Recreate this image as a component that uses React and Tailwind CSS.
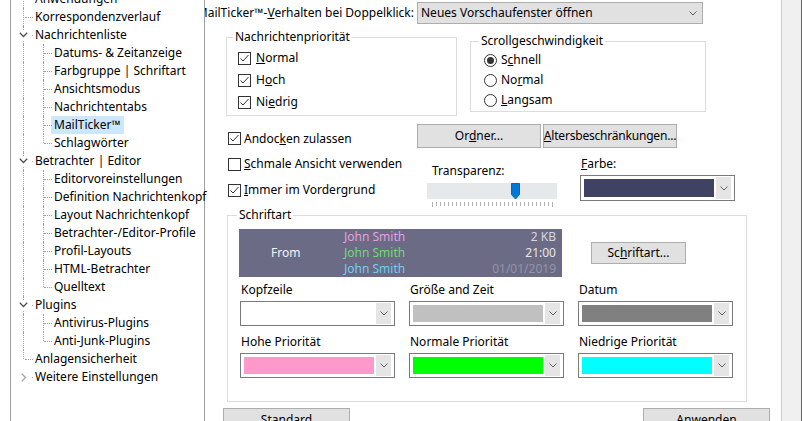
import React from 'react';

function Chevron({ color = '#606060' }) {
  return (
    <svg width="8" height="5" viewBox="0 0 8 5" className="block">
      <polyline points="0.5,0.5 4,4 7.5,0.5" fill="none" stroke={color} strokeWidth="1" />
    </svg>
  );
}

function TreeChevron({ open }) {
  return open ? (
    <svg width="9" height="6" viewBox="0 0 9 6" className="block">
      <polyline points="0.8,0.8 4.5,4.5 8.2,0.8" fill="none" stroke="#505050" strokeWidth="1.3" />
    </svg>
  ) : (
    <svg width="6" height="9" viewBox="0 0 6 9" className="block">
      <polyline points="0.8,0.8 4.5,4.5 0.8,8.2" fill="none" stroke="#a8a8a8" strokeWidth="1.3" />
    </svg>
  );
}

const rows = [
  { t: 'Anwendungen', lvl: 1, l1: 'full' },
  { t: 'Korrespondenzverlauf', lvl: 1, l1: 'full' },
  { t: 'Nachrichtenliste', lvl: 1, l1: 'full', exp: 'open' },
  { t: 'Datums- & Zeitanzeige', lvl: 2, l1: 'full', l2: 'full' },
  { t: 'Farbgruppe | Schriftart', lvl: 2, l1: 'full', l2: 'full' },
  { t: 'Ansichtsmodus', lvl: 2, l1: 'full', l2: 'full' },
  { t: 'Nachrichtentabs', lvl: 2, l1: 'full', l2: 'full' },
  { t: 'MailTicker™', lvl: 2, l1: 'full', l2: 'full', sel: true },
  { t: 'Schlagwörter', lvl: 2, l1: 'full', l2: 'half' },
  { t: 'Betrachter | Editor', lvl: 1, l1: 'full', exp: 'open' },
  { t: 'Editorvoreinstellungen', lvl: 2, l1: 'full', l2: 'full' },
  { t: 'Definition Nachrichtenkopf', lvl: 2, l1: 'full', l2: 'full' },
  { t: 'Layout Nachrichtenkopf', lvl: 2, l1: 'full', l2: 'full' },
  { t: 'Betrachter-/Editor-Profile', lvl: 2, l1: 'full', l2: 'full' },
  { t: 'Profil-Layouts', lvl: 2, l1: 'full', l2: 'full' },
  { t: 'HTML-Betrachter', lvl: 2, l1: 'full', l2: 'full' },
  { t: 'Quelltext', lvl: 2, l1: 'full', l2: 'half' },
  { t: 'Plugins', lvl: 1, l1: 'full', exp: 'open' },
  { t: 'Antivirus-Plugins', lvl: 2, l1: 'full', l2: 'full' },
  { t: 'Anti-Junk-Plugins', lvl: 2, l1: 'full', l2: 'half' },
  { t: 'Anlagensicherheit', lvl: 1, l1: 'half' },
  { t: 'Weitere Einstellungen', lvl: 1, l1: 'none', exp: 'closed' },
];

function TreeRow({ r }) {
  return (
    <div className="relative h-[18px] flex items-center whitespace-nowrap">
      {r.l1 === 'full' && (
        <span className="absolute left-[12px] top-0 h-[18px] border-l border-dotted border-[#a0a0a0]" />
      )}
      {r.l1 === 'half' && (
        <span className="absolute left-[12px] top-0 h-[9px] border-l border-dotted border-[#a0a0a0]" />
      )}
      {r.lvl === 1 && !r.exp && (
        <span className="absolute left-[14px] top-[9px] w-[8px] border-t border-dotted border-[#a0a0a0]" />
      )}
      {r.lvl === 1 && r.exp && (
        <span className="absolute left-[21px] top-[9px] w-[1px] h-[1px] bg-[#a0a0a0]" />
      )}
      {r.exp === 'open' && (
        <span className="absolute left-[7px] top-[4px] w-[11px] h-[10px] bg-white flex items-center justify-center">
          <TreeChevron open />
        </span>
      )}
      {r.exp === 'closed' && (
        <span className="absolute left-[8px] top-[4px] w-[9px] h-[10px] bg-white flex items-center justify-center">
          <TreeChevron open={false} />
        </span>
      )}
      {r.l2 === 'full' && (
        <span className="absolute left-[32px] top-0 h-[18px] border-l border-dotted border-[#a0a0a0]" />
      )}
      {r.l2 === 'half' && (
        <span className="absolute left-[32px] top-0 h-[9px] border-l border-dotted border-[#a0a0a0]" />
      )}
      {r.lvl === 2 && (
        <span className="absolute left-[33px] top-[9px] w-[8px] border-t border-dotted border-[#a0a0a0]" />
      )}
      {r.lvl === 1 ? (
        <span className="ml-[24px]">{r.t}</span>
      ) : r.sel ? (
        <span className="ml-[40px] px-[3px] h-[18px] flex items-center bg-[#cce8ff]">{r.t}</span>
      ) : (
        <span className="ml-[43px]">{r.t}</span>
      )}
    </div>
  );
}

function Check({ checked }) {
  return (
    <span className="w-[13px] h-[13px] border border-[#333333] bg-white flex items-center justify-center shrink-0">
      {checked && (
        <svg width="11" height="11" viewBox="0 0 11 11" className="block">
          <polyline points="1.5,5.5 4,8 9.5,2" fill="none" stroke="#333333" strokeWidth="1" />
        </svg>
      )}
    </span>
  );
}

function Radio({ checked }) {
  return (
    <span className="w-[13px] h-[13px] rounded-full border border-[#333333] bg-white flex items-center justify-center shrink-0">
      {checked && <span className="w-[7px] h-[7px] rounded-full bg-[#333333]" />}
    </span>
  );
}

function Combo({ swatch, tall }) {
  return (
    <div
      className={`w-[155px] ${tall ? 'h-[26px]' : 'h-[25px]'} border border-[#7a7a7a] bg-white flex items-center p-[3px] gap-[2px]`}
    >
      <div className={`flex-1 h-full ${swatch}`} />
      <div className={`w-[15px] ${tall ? 'h-[22px]' : 'h-[21px]'} bg-[#e5e5e5] flex items-center justify-center shrink-0`}>
        <Chevron />
      </div>
    </div>
  );
}

function ComboCell({ label, swatch }) {
  return (
    <div className="flex flex-col">
      <div className="h-[16px] pl-[1px]">{label}</div>
      <div className="mt-[3px]">
        <Combo swatch={swatch} />
      </div>
    </div>
  );
}

export default function App() {
  return (
    <div className="font-['Noto_Sans',sans-serif] w-[802px] h-[421px] overflow-hidden bg-white flex text-[12px] leading-[16px] text-black">
      {/* Tree */}
      <div className="w-[205px] shrink-0 pl-[10px]">
        <div className="w-[195px] h-[470px] -mt-[20px] pt-[9px] border border-[#a0a0a0] bg-white">
          {rows.map((r, i) => (
            <TreeRow key={i} r={r} />
          ))}
        </div>
      </div>

      {/* Main settings */}
      <div className="w-[576px] shrink-0 flex flex-col">
        <div className="flex items-center mt-[2px] h-[22px]">
          <div className="w-[212px] overflow-hidden flex justify-end pr-[3px] whitespace-nowrap">
            <span className="shrink-0">
              MailTicker™-<u>V</u>erhalten bei Doppelklick:
            </span>
          </div>
          <div className="w-[286px] h-[22px] border border-[#adadad] bg-[#e1e1e1] flex items-center justify-between pl-[3px] pr-[5px]">
            <span>Neues Vorschaufenster öffnen</span>
            <Chevron />
          </div>
        </div>

        <div className="flex items-start mt-[5px]">
          <fieldset className="ml-[21px] w-[231px] border border-[#dcdcdc] pt-[2px] pb-[2px]">
            <legend className="ml-[6px] px-[2px]">Nachrichtenpriorität</legend>
            <div className="pl-[11px]">
              <div className="h-[22px] flex items-center gap-[5px]">
                <Check checked />
                <span>
                  <u>N</u>ormal
                </span>
              </div>
              <div className="h-[22px] flex items-center gap-[5px]">
                <Check checked />
                <span>
                  H<u>o</u>ch
                </span>
              </div>
              <div className="h-[22px] flex items-center gap-[5px]">
                <Check checked />
                <span>
                  Ni<u>e</u>drig
                </span>
              </div>
            </div>
          </fieldset>
          <fieldset className="ml-[13px] mt-[4px] w-[236px] border border-[#dcdcdc] pt-[1px] pb-[1px]">
            <legend className="ml-[8px] px-[2px]">Scrollgeschwindigkeit</legend>
            <div className="pl-[13px]">
              <div className="h-[20px] flex items-center gap-[4px]">
                <Radio checked />
                <span>
                  S<u>c</u>hnell
                </span>
              </div>
              <div className="h-[20px] flex items-center gap-[4px]">
                <Radio />
                <span>
                  No<u>r</u>mal
                </span>
              </div>
              <div className="h-[20px] flex items-center gap-[4px]">
                <Radio />
                <span>
                  <u>L</u>angsam
                </span>
              </div>
            </div>
          </fieldset>
        </div>

        <div className="flex h-[91px]">
          <div className="ml-[23px] w-[189px] pt-[10px] flex flex-col">
            <div className="h-[25px] flex items-center gap-[3px]">
              <Check checked />
              <span>
                Andoc<u>k</u>en zulassen
              </span>
            </div>
            <div className="h-[26px] flex items-center gap-[3px]">
              <Check />
              <span>
                <u>S</u>chmale Ansicht verwenden
              </span>
            </div>
            <div className="h-[26px] flex items-center gap-[3px]">
              <Check checked />
              <span>
                <u>I</u>mmer im Vordergrund
              </span>
            </div>
          </div>
          <div className="flex flex-col pt-[8px]">
            <div className="flex h-[24px] gap-[2px]">
              <div className="w-[124px] h-[24px] border border-[#adadad] bg-[#e1e1e1] flex items-center justify-center">
                <span>
                  Or<u>d</u>ner...
                </span>
              </div>
              <div className="w-[134px] h-[24px] border border-[#adadad] bg-[#e1e1e1] flex items-center justify-center tracking-[-0.2px]">
                <span>
                  <u>A</u>ltersbeschränkungen...
                </span>
              </div>
            </div>
            <div className="flex items-start">
              <div className="ml-[10px] w-[130px] mt-[15px] flex flex-col">
                <div className="h-[16px] pl-[5px]">Transparenz:</div>
                <div className="relative mt-[4px] h-[16px] bg-[#e6e8ea]">
                  <svg width="9" height="17" viewBox="0 0 9 17" className="absolute left-[84px] top-0">
                    <path d="M0.5 0.5 H8.5 V11.5 L4.5 16 L0.5 11.5 Z" fill="#0078d7" stroke="#0068c0" strokeWidth="1" />
                  </svg>
                </div>
                <svg width="130" height="5" viewBox="0 0 130 5" className="block mt-[3px]">
                  {Array.from({ length: 31 }).map((_, i) => (
                    <line key={i} x1={5.5 + i * 4} y1="0" x2={5.5 + i * 4} y2={i === 0 || i === 30 ? 5 : 4} stroke="#b0b0b0" strokeWidth="1" />
                  ))}
                </svg>
              </div>
              <div className="ml-[23px] mt-[8px] flex flex-col">
                <div className="h-[16px] pl-[1px]">
                  <u>F</u>arbe:
                </div>
                <div className="mt-[3px]">
                  <Combo swatch="bg-[#3f4262]" tall />
                </div>
              </div>
            </div>
          </div>
        </div>

        <fieldset className="ml-[22px] w-[520px] border border-[#dcdcdc] pt-[6px] pb-[23px]">
          <legend className="ml-[9px] px-[2px]">Schriftart</legend>
          <div className="flex items-start pl-[11px]">
            <div className="w-[323px] h-[48px] bg-[#6c6b86] flex">
              <div className="w-[105px] flex items-center pl-[32px] text-[#f4f4f4]">From</div>
              <div className="flex-1 flex flex-col">
                <div className="h-[16px] text-[#e3a0e0]">John Smith</div>
                <div className="h-[16px] text-[#6fda6f]">John Smith</div>
                <div className="h-[16px] text-[#6fcdf2]">John Smith</div>
              </div>
              <div className="flex flex-col items-end pr-[6px]">
                <div className="h-[16px] text-[#d6d6de]">2 KB</div>
                <div className="h-[16px] text-[#e6e6e6]">21:00</div>
                <div className="h-[16px] text-[#9394a6]">01/01/2019</div>
              </div>
            </div>
            <div className="ml-[29px] mt-[13px] w-[95px] h-[22px] border border-[#adadad] bg-[#e1e1e1] flex items-center justify-center">
              <span>
                Sc<u>h</u>riftart...
              </span>
            </div>
          </div>
          <div className="mt-[5px] pl-[12px] grid grid-cols-[155px_155px_155px] gap-x-[14px] gap-y-[8px]">
            <ComboCell label="Kopfzeile" swatch="bg-white" />
            <ComboCell label="Größe and Zeit" swatch="bg-[#c0c0c0]" />
            <ComboCell label="Datum" swatch="bg-[#808080]" />
            <ComboCell label="Hohe Priorität" swatch="bg-[#ff99cc]" />
            <ComboCell label="Normale Priorität" swatch="bg-[#00ff00]" />
            <ComboCell label="Niedrige Priorität" swatch="bg-[#00ffff]" />
          </div>
        </fieldset>

        <div className="flex mt-[6px]">
          <div className="ml-[18px] w-[127px] h-[23px] border border-[#adadad] bg-[#e1e1e1] flex items-center justify-center">
            Standard
          </div>
          <div className="ml-[293px] w-[127px] h-[23px] border border-[#adadad] bg-[#e1e1e1] flex items-center justify-center">
            Anwenden
          </div>
        </div>
      </div>

      {/* Right edge strip */}
      <div className="w-[21px] shrink-0 border-l border-r border-l-[#cccccc] border-r-[#666666] bg-[#f0f0f0]" />
    </div>
  );
}
